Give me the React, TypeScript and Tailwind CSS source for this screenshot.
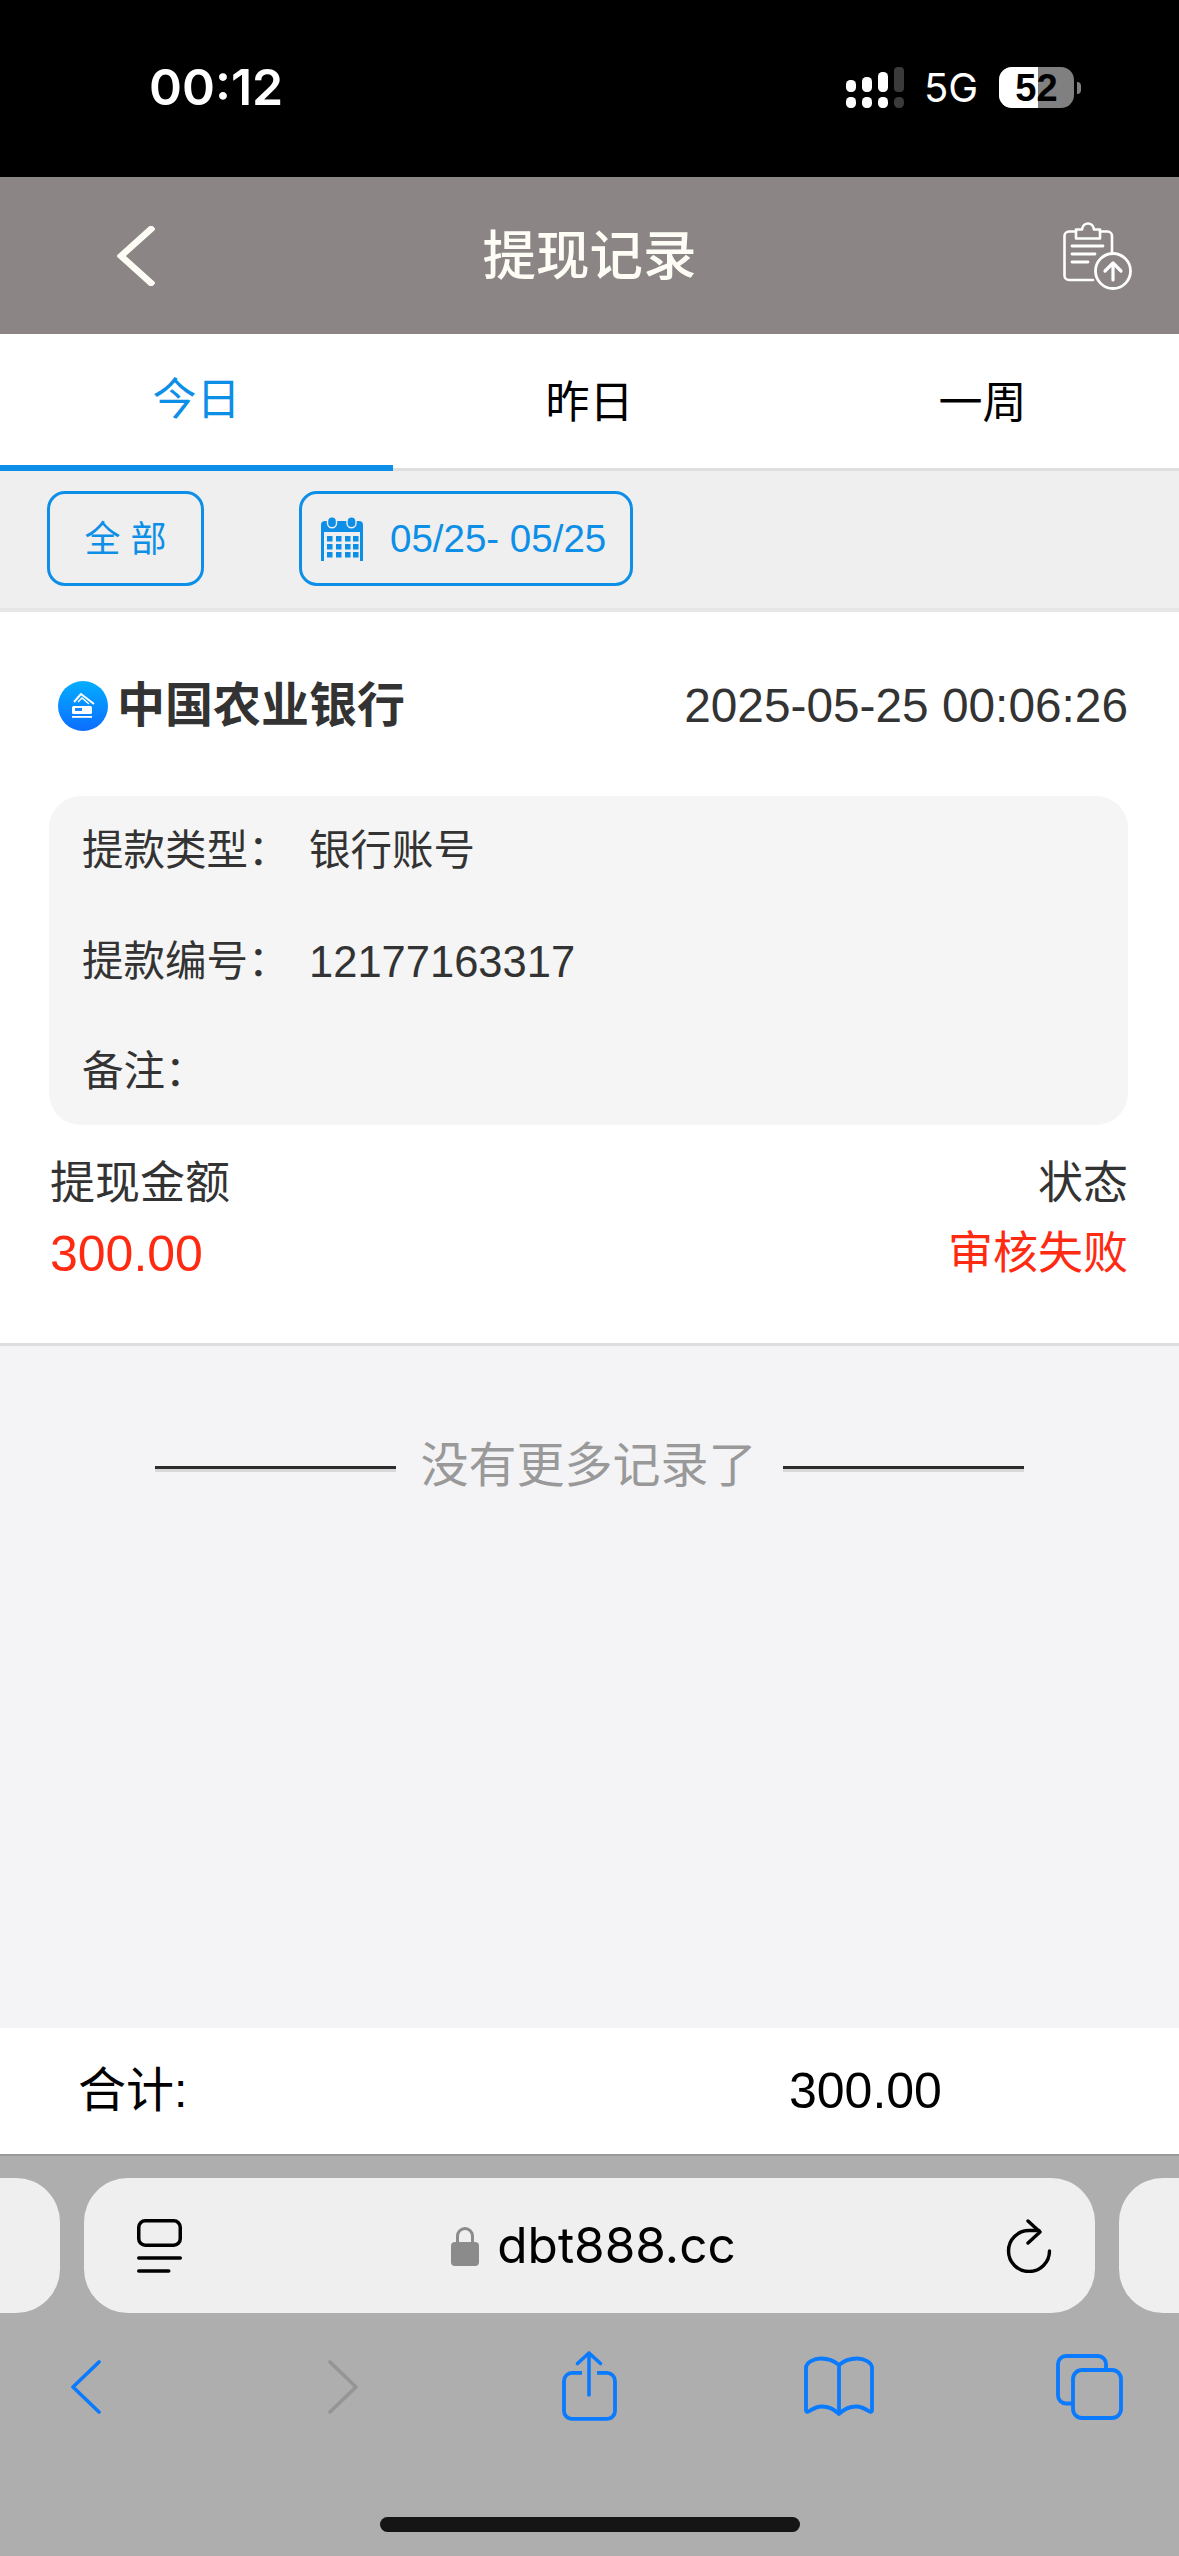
import React from "react";

const TABS = ["今日", "昨日", "一周"];

const SignalIcon = () => (
  <svg width="60" height="42" viewBox="0 0 60 42" className="block">
    <rect x="0" y="13" width="10" height="12" rx="4.5" fill="#fff" />
    <rect x="16" y="10" width="10" height="15" rx="4.5" fill="#fff" />
    <rect x="32" y="5" width="10" height="20" rx="4.5" fill="#fff" />
    <rect x="48" y="0" width="10" height="25" rx="4" fill="#3a3a3a" />
    <rect x="0" y="30" width="10" height="11" rx="4.5" fill="#fff" />
    <rect x="16" y="30" width="10" height="11" rx="4.5" fill="#fff" />
    <rect x="32" y="30" width="10" height="11" rx="4.5" fill="#fff" />
    <rect x="48" y="30" width="10" height="11" rx="4.5" fill="#3a3a3a" />
  </svg>
);

const ClipboardIcon = () => (
  <svg width="70" height="68" viewBox="0 0 70 68" fill="none" stroke="#fff" strokeLinecap="round" strokeLinejoin="round" className="block">
    <path d="M13 9.5H6A4.5 4.5 0 0 0 1.5 14v39.5A4.5 4.5 0 0 0 6 58h24" strokeWidth="2.6" />
    <path d="M37 9.5h7.5A4.5 4.5 0 0 1 49 14v18" strokeWidth="2.6" />
    <path d="M13 16.5h24V7.5h-6c-1-8-11-8-12 0h-6z" strokeWidth="2.6" />
    <path d="M9 24h31M9 32h23M9 40h16" strokeWidth="2.8" />
    <circle cx="50" cy="49" r="17.5" strokeWidth="2.8" />
    <path d="M50 58V41M42 49l8-8 8 8" strokeWidth="3.2" />
  </svg>
);

const CalendarIcon = () => (
  <svg width="42" height="45" viewBox="0 0 42 45" className="block">
    <path d="M0 9a4 4 0 0 1 4-4h34a4 4 0 0 1 4 4v36H0z" fill="#0d8fe8" />
    <rect x="3" y="16" width="36" height="29" fill="#efefef" />
    <rect x="6.5" y="0.7" width="9" height="11" rx="4.5" fill="#0d8fe8" stroke="#efefef" strokeWidth="1.4" />
    <rect x="26" y="0.7" width="9" height="11" rx="4.5" fill="#0d8fe8" stroke="#efefef" strokeWidth="1.4" />
    {[20, 28, 36].map((y) =>
      [6, 15, 24, 32].map((x) => <rect key={`${x}-${y}`} x={x} y={y} width="5.5" height="5.5" fill="#0d8fe8" />),
    )}
  </svg>
);

const BankIcon = () => (
  <svg width="50" height="50" viewBox="0 0 50 50" className="block">
    <defs>
      <linearGradient id="bank" x1="0" y1="0" x2="0" y2="1">
        <stop offset="0" stopColor="#04aeff" />
        <stop offset="1" stopColor="#0b6dff" />
      </linearGradient>
    </defs>
    <circle cx="25" cy="25" r="25" fill="url(#bank)" />
    <path d="M16 21l7-8 13 10" fill="none" stroke="#fff" strokeWidth="2" strokeLinejoin="round" />
    <path d="M20 21l4-4 7 6" fill="none" stroke="#fff" strokeWidth="1.4" />
    <rect x="14" y="25" width="20" height="8" rx="1.5" fill="#fff" />
    <rect x="17" y="27" width="7" height="3" fill="#1c86ff" />
    <rect x="14" y="35" width="20" height="1.8" fill="#fff" />
  </svg>
);

const TabOverviewIcon = () => (
  <svg width="45" height="54" viewBox="0 0 45 54" fill="none" stroke="#000" strokeLinecap="round" className="block">
    <rect x="1.75" y="1.75" width="41.5" height="24.5" rx="6.5" strokeWidth="3.5" />
    <path d="M1.75 39h41.5M1.75 52h30" strokeWidth="3.5" />
  </svg>
);

const LockIcon = () => (
  <svg width="28" height="40" viewBox="0 0 28 40" className="block">
    <path d="M6.5 18v-8a7.5 7.5 0 0 1 15 0v8" fill="none" stroke="#8b8b8b" strokeWidth="3" />
    <rect x="0" y="16" width="28" height="24" rx="4" fill="#8b8b8b" />
  </svg>
);

const ReloadIcon = () => (
  <svg width="50" height="54" viewBox="0 0 50 54" fill="none" stroke="#000" strokeWidth="3.4" strokeLinecap="round" strokeLinejoin="round" className="block">
    <path d="M44.5 32A20.5 20.5 0 1 1 24 11.5h10" />
    <path d="M23 2l12 11-12 11" />
  </svg>
);

const BackIcon = () => (
  <svg width="30" height="54" viewBox="0 0 30 54" fill="none" stroke="#0a7aff" strokeWidth="3.6" strokeLinecap="round" strokeLinejoin="round" className="block">
    <path d="M28 2L2 27l26 25" />
  </svg>
);

const ForwardIcon = () => (
  <svg width="30" height="54" viewBox="0 0 30 54" fill="none" stroke="#959595" strokeWidth="3.6" strokeLinecap="round" strokeLinejoin="round" className="block">
    <path d="M2 2l26 25L2 52" />
  </svg>
);

const ShareIcon = () => (
  <svg width="60" height="73" viewBox="0 0 60 73" fill="none" stroke="#0a7aff" strokeLinecap="round" strokeLinejoin="round" className="block">
    <path d="M22 22.9H12a8 8 0 0 0-8 8v30a8 8 0 0 0 8 8h35a8 8 0 0 0 8-8v-30a8 8 0 0 0-8-8H37" strokeWidth="3.8" strokeLinecap="butt" />
    <path d="M29 45V3M17.5 13.5L29 3l11.5 10.5" strokeWidth="3.6" />
  </svg>
);

const BookIcon = () => (
  <svg width="72" height="61" viewBox="0 0 72 61" fill="none" stroke="#0a7aff" strokeWidth="3.8" strokeLinecap="round" strokeLinejoin="round" className="block">
    <path d="M36 9C31 4.5 25 2.5 18 2.5 11 2.5 3 6.5 3 12v42c0 1.5 1 2.5 2.5 1.5C10 52.5 14 50.5 19 50.5c7 0 12 2.5 17 7.5 5-5 10-7.5 17-7.5 5 0 9 2 13.5 5 1.5 1 2.5 0 2.5-1.5V12c0-5.500-8-9.500-15-9.500C47 2.500 41 4.500 36 9zM36 9v49" />
  </svg>
);

const TabsIcon = () => (
  <svg width="68" height="68" viewBox="0 0 68 68" fill="none" stroke="#0a7aff" strokeWidth="3.8" strokeLinejoin="round" className="block">
    <path d="M18 50.5h-7a8 8 0 0 1-8-8V11a8 8 0 0 1 8-8h32a8 8 0 0 1 8 8v6" />
    <rect x="18" y="17" width="48" height="48" rx="9" />
  </svg>
);

export default function App() {
  return (
    <div className="flex h-[2556px] w-[1179px] flex-col overflow-hidden bg-[#f4f4f6] font-['Liberation_Sans','Noto_Sans_CJK_SC',sans-serif] text-[#333]">
      {/* status bar */}
      <div className="flex h-[177px] shrink-0 items-start bg-black pl-[149px] text-white">
        <span className="mt-[57px] w-[697px] font-['Inter'] text-[50px] font-semibold leading-[60px]">00:12</span>
        <div className="mt-[67px]">
          <SignalIcon />
        </div>
        <span className="ml-[18px] mt-[65px] w-[55px] font-['Inter'] text-[40px] leading-[46px]">5G</span>
        <div className="ml-[20px] mt-[67px] flex items-center">
          <div className="relative h-[41px] w-[75px] overflow-hidden rounded-[13px] bg-[#808080]">
            <div className="absolute inset-y-0 left-0 w-[39px] bg-white" />
            <span className="absolute inset-0 flex items-center justify-center text-[38px] font-bold leading-none text-black">52</span>
          </div>
          <div className="ml-[3px] h-[12px] w-[4px] rounded-r-full bg-[#808080]" />
        </div>
      </div>

      {/* header */}
      <div className="grid h-[157px] shrink-0 grid-cols-[1fr_auto_1fr] items-center bg-[#8b8685] px-[46px]">
        <svg width="38" height="60" viewBox="0 0 38 60" fill="none" stroke="#fdfdf5" strokeWidth="6.5" strokeLinecap="square" className="ml-[71px] block">
          <path d="M34 3L4 30l30 27" />
        </svg>
        <span className="pt-[3px] text-[53.5px] font-medium leading-none text-[#fdfdf5]">提现记录</span>
        <div className="justify-self-end">
          <ClipboardIcon />
        </div>
      </div>

      {/* tabs */}
      <div className="flex h-[137px] shrink-0 border-b-[3px] border-[#dedede] bg-white">
        {TABS.map((t, i) => (
          <div
            key={t}
            className={`-mb-[3px] flex w-[393px] items-center justify-center text-[44px] ${
              i === 0 ? "border-b-[6px] border-[#0d8fe8] text-[#0d8fe8]" : "text-black"
            }`}
          >
            {t}
          </div>
        ))}
      </div>

      {/* filter */}
      <div className="flex h-[141px] shrink-0 items-start border-b-[4px] border-[#e6e6e6] bg-[#efefef] pl-[47px] pt-[20px] text-[#0d8fe8]">
        <div className="flex h-[95px] w-[157px] items-center justify-center rounded-[18px] border-[3px] border-[#0d8fe8] pt-[3px] text-[36px]">
          全 部
        </div>
        <div className="ml-[95px] flex h-[95px] w-[334px] items-center rounded-[18px] border-[3px] border-[#0d8fe8] pl-[19px]">
          <CalendarIcon />
          <span className="ml-[27px] pt-[2px] text-[38.5px] leading-none">05/25- 05/25</span>
        </div>
      </div>

      {/* record */}
      <div className="h-[734px] shrink-0 border-b-[3px] border-[#dddddd] bg-white pl-[50px] pr-[51px]">
        <div className="flex h-[184px] items-center justify-between pt-[4px]">
          <div className="ml-[8px] flex items-center">
            <BankIcon />
            <span className="ml-[9px] text-[48px] font-bold leading-none text-[#333]">中国农业银行</span>
          </div>
          <span className="text-[47.8px] leading-none text-[#333]">2025-05-25 00:06:26</span>
        </div>
        <div className="-ml-[1px] flex h-[329px] flex-col justify-between rounded-[32px] bg-[#f5f5f5] px-[33px] pb-[25px] pt-[27px] text-[41.5px] leading-[56px] text-[#333]">
          <div className="flex">
            <span className="w-[227px]">提款类型：</span>
            <span>银行账号</span>
          </div>
          <div className="flex">
            <span className="w-[227px]">提款编号：</span>
            <span className="text-[43.5px]">12177163317</span>
          </div>
          <div className="flex">
            <span className="w-[227px]">备注：</span>
          </div>
        </div>
        <div className="flex justify-between pt-[31px]">
          <div className="flex flex-col">
            <span className="text-[45px] leading-[56px]">提现金额</span>
            <span className="mt-[14px] text-[50px] leading-[56px] text-[#ff2a12]">300.00</span>
          </div>
          <div className="flex flex-col items-end">
            <span className="text-[45px] leading-[56px]">状态</span>
            <span className="mt-[14px] text-[45px] leading-[56px] text-[#ff2a12]">审核失败</span>
          </div>
        </div>
      </div>

      {/* no more */}
      <div className="flex-1 pt-[91px]">
        <div className="flex items-center justify-center">
          <div className="mt-[5px] h-[6px] w-[241px] border-t-[3px] border-[#2d2d2d] bg-[#d8d8d8]" />
          <span className="ml-[24px] mr-[26px] text-[48px] leading-[58px] text-[#999]">没有更多记录了</span>
          <div className="mt-[5px] h-[6px] w-[241px] border-t-[3px] border-[#2d2d2d] bg-[#d8d8d8]" />
        </div>
      </div>

      {/* total */}
      <div className="flex h-[126px] shrink-0 items-center bg-white pl-[78px] text-black">
        <span className="w-[711px] text-[48px] leading-none">合计:</span>
        <span className="text-[50px] leading-none">300.00</span>
      </div>

      {/* safari bar */}
      <div className="flex h-[402px] shrink-0 flex-col border-t-[2px] border-[#999] bg-[#aeaeae]">
        <div className="mt-[22px] flex h-[135px] shrink-0">
          <div className="w-[60px] rounded-r-[44px] bg-[#efefef]" />
          <div className="ml-[24px] flex w-[1011px] items-center justify-between rounded-[44px] bg-[#efefef] pl-[53px] pr-[40px]">
            <TabOverviewIcon />
            <div className="flex items-center">
              <LockIcon />
              <span className="ml-[18px] font-['Inter'] text-[49.5px] leading-none text-black">dbt888.cc</span>
            </div>
            <ReloadIcon />
          </div>
          <div className="ml-[24px] flex-1 rounded-l-[44px] bg-[#efefef]" />
        </div>
        <div className="mt-[37px] flex h-[73px] shrink-0 items-center pl-[71px]">
          <BackIcon />
          <div className="ml-[227px]">
            <ForwardIcon />
          </div>
          <div className="ml-[202px]">
            <ShareIcon />
          </div>
          <div className="ml-[183px]">
            <BookIcon />
          </div>
          <div className="ml-[180px]">
            <TabsIcon />
          </div>
        </div>
        <div className="mt-[94px] flex justify-center">
          <div className="h-[15px] w-[420px] rounded-full bg-[#151515]" />
        </div>
      </div>
    </div>
  );
}
